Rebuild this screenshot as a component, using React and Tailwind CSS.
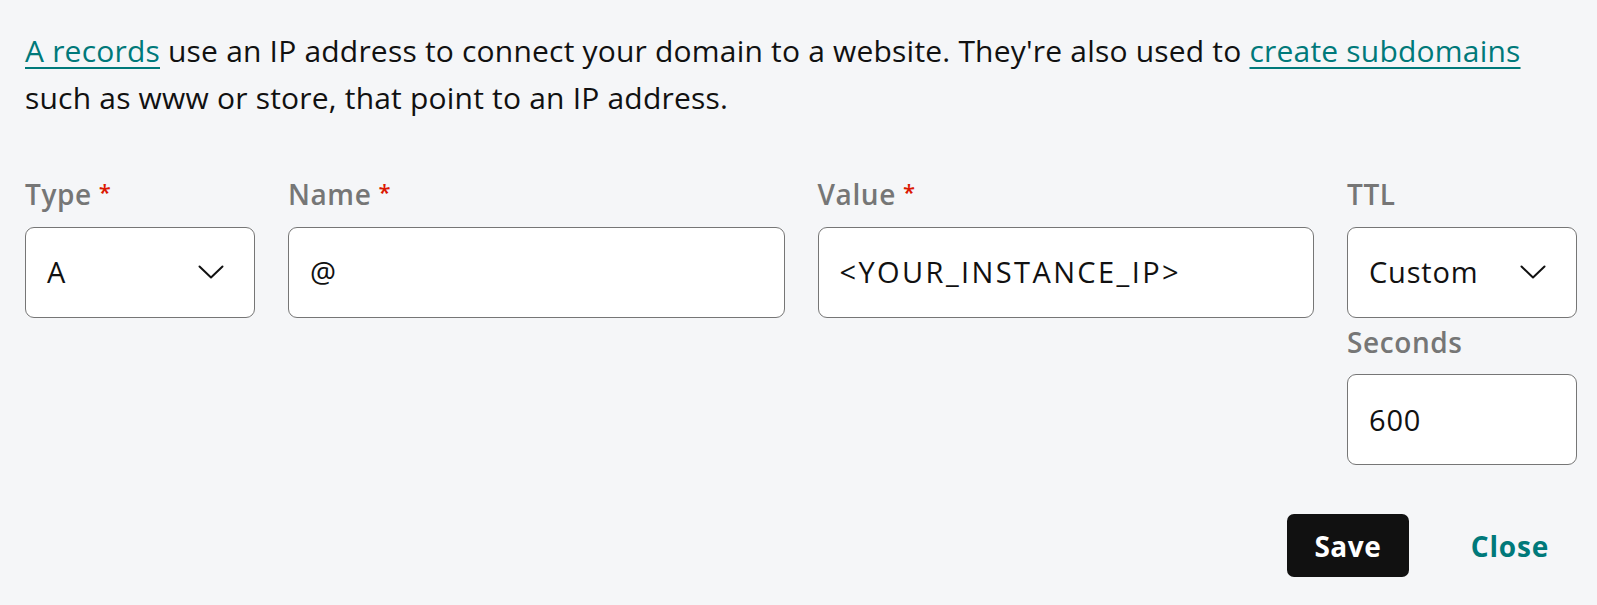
import React from "react";

function Chevron() {
  return (
    <svg width="26" height="14" viewBox="0 0 26 14" fill="none" className="shrink-0">
      <path d="M1.5 1.5 L13 12.5 L24.5 1.5" stroke="#111111" strokeWidth="2" strokeLinecap="round" strokeLinejoin="round" />
    </svg>
  );
}

function Label({ children, required }) {
  return (
    <div className="flex items-start text-[28px] leading-[33.6px] font-semibold tracking-[0.6px] text-[#767676] mb-[15px]">
      <span>{children}</span>
      {required && <span className="text-[#db1802] text-[22px] leading-[22px] ml-[7px] mt-[2px]">*</span>}
    </div>
  );
}

function Box({ children, select, wide }) {
  return (
    <div className="h-[91px] bg-white border-[1.5px] border-[#767676] rounded-[9px] flex items-center justify-between pl-[21px] pr-[30px] text-[29px] leading-[34px] text-[#111111]">
      <span className={wide ? "tracking-[2.4px]" : "tracking-[0.8px]"}>{children}</span>
      {select && <Chevron />}
    </div>
  );
}

export default function App() {
  return (
    <div
      className="w-[1597px] h-[605px] bg-[#f5f6f8] pl-[25px] pr-[20px] pt-[27px]"
      style={{ fontFamily: "'Open Sans', 'Noto Sans', sans-serif" }}
    >
      <p className="text-[30px] leading-[47px] tracking-[0.2px] text-[#111111]">
        <a className="text-[#00797a] underline decoration-[2px] underline-offset-[5px]">A records</a>{" "}
        use an IP address to connect your domain to a website. They're also used to{" "}
        <a className="text-[#00797a] underline decoration-[2px] underline-offset-[5px]">create subdomains</a>{" "}
        such as www or store, that point to an IP address.
      </p>

      <div className="mt-[57px] grid grid-cols-[230px_1fr_1fr_230px] gap-x-[33px]">
        <div>
          <Label required>Type</Label>
          <Box select>A</Box>
        </div>
        <div>
          <Label required>Name</Label>
          <Box>@</Box>
        </div>
        <div>
          <Label required>Value</Label>
          <Box wide>&lt;YOUR_INSTANCE_IP&gt;</Box>
        </div>
        <div>
          <Label>TTL</Label>
          <Box select>Custom</Box>
          <div className="mt-[8px]">
            <Label>Seconds</Label>
          </div>
          <Box>600</Box>
        </div>
      </div>

      <div className="mt-[49px] flex justify-end items-center gap-[34px]">
        <button className="w-[122px] h-[63px] bg-[#111111] rounded-[7px] text-white text-[28px] font-bold tracking-[0.5px]">
          Save
        </button>
        <button className="h-[63px] px-[28px] text-[#00797a] text-[28px] font-bold tracking-[0.8px]">
          Close
        </button>
      </div>
    </div>
  );
}
